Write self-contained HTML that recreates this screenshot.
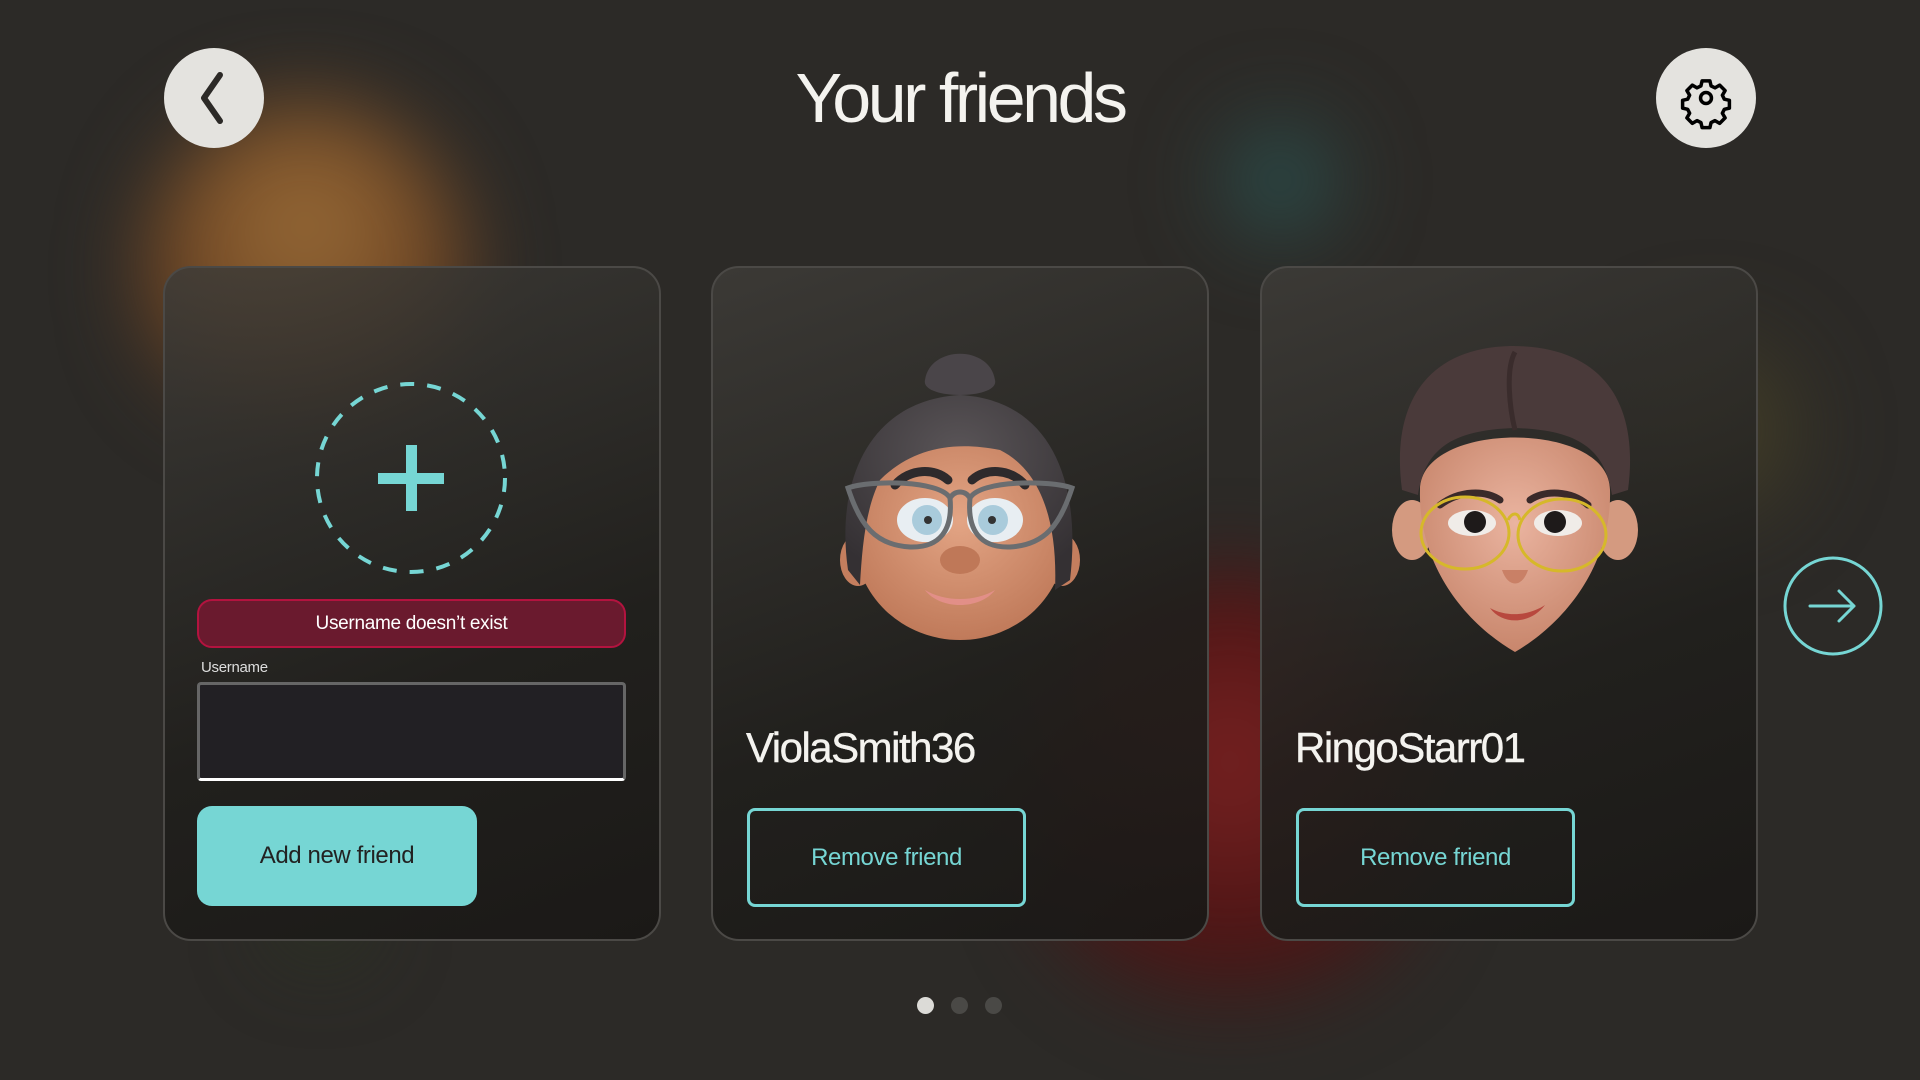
<!DOCTYPE html>
<html><head><meta charset="utf-8">
<style>
*{margin:0;padding:0;box-sizing:border-box}
html,body{width:1920px;height:1080px;overflow:hidden;background:#2c2a27;font-family:"Liberation Sans",sans-serif}
.blob{position:absolute;border-radius:50%;filter:blur(40px)}
.card{position:absolute;top:266px;width:498px;height:675px;border:2px solid #4b4946;border-radius:28px;background:linear-gradient(160deg,rgba(62,60,56,0.85),rgba(32,31,28,0.9) 60%,rgba(26,24,22,0.95));overflow:hidden}
.circbtn{position:absolute;width:100px;height:100px;border-radius:50%;background:#e4e3df;top:48px}
.title{position:absolute;left:0;width:1920px;top:58px;text-align:center;color:#f4f3ef;font-size:70px;letter-spacing:-3.5px;line-height:80px}
.err{position:absolute;left:197px;top:599px;width:429px;height:49px;background:#6a1a2e;border:2px solid #b3133f;border-radius:15px;color:#fff;font-size:19px;text-align:center;line-height:45px;letter-spacing:-0.3px}
.lbl{position:absolute;left:201px;top:659px;color:#ddd;font-size:15px;letter-spacing:-0.3px}
.inp{position:absolute;left:197px;top:682px;width:429px;height:99px;background:#222024;border:3px solid #666;border-bottom:3px solid #fff;border-radius:4px}
.add{position:absolute;left:197px;top:806px;width:280px;height:100px;background:#76d6d4;border-radius:15px;color:#222;font-size:24px;text-align:center;line-height:100px;letter-spacing:-0.4px}
.rem{position:absolute;top:808px;width:279px;height:99px;border:3px solid #76d6d4;border-radius:8px;color:#76d6d4;font-size:24px;text-align:center;line-height:93px;letter-spacing:-0.4px}
.name{position:absolute;top:724px;color:#f4f3ef;font-size:42px;letter-spacing:-1.5px;-webkit-text-stroke:0.4px #f4f3ef}
.dot{position:absolute;top:997px;width:17px;height:17px;border-radius:50%;background:#4a4946}
</style></head><body>
<div class="blob" style="left:140px;top:100px;width:330px;height:360px;background:radial-gradient(circle at 50% 35%,#9a6d38,#6b4222 55%,rgba(60,35,20,0) 75%)"></div>
<div class="blob" style="left:1200px;top:100px;width:160px;height:160px;background:radial-gradient(circle,#2a5a58,rgba(20,50,45,0) 72%)"></div>
<div class="blob" style="left:1030px;top:570px;width:400px;height:480px;background:radial-gradient(circle at 50% 40%,#7a2222,#4a1414 55%,rgba(60,20,20,0) 75%)"></div>
<div class="blob" style="left:1600px;top:300px;width:220px;height:260px;background:radial-gradient(circle,#4a4426,rgba(60,55,30,0) 72%)"></div>
<div class="blob" style="left:250px;top:860px;width:140px;height:110px;background:radial-gradient(circle,#2a3620,rgba(40,50,30,0) 72%)"></div>

<div class="circbtn" style="left:164px"><svg width="100" height="100" viewBox="0 0 100 100"><path d="M56 27 L40 50 L56 73" fill="none" stroke="#2c2a27" stroke-width="6" stroke-linecap="round" stroke-linejoin="round"/></svg></div>
<div class="circbtn" style="left:1656px"><svg width="100" height="100" viewBox="0 0 100 100"><g transform="translate(50 50) scale(0.78) translate(-50 -50)" fill="none" stroke="#000" stroke-width="4.5" stroke-linejoin="round"><path d="M45 28 h10 l1.5 6.5 l5 2.5 l6-3.5 l7 7 l-3.5 6 l2.5 5 l6.5 1.5 v10 l-6.5 1.5 l-2.5 5 l3.5 6 l-7 7 l-6-3.5 l-5 2.5 l-1.5 6.5 h-10 l-1.5-6.5 l-5-2.5 l-6 3.5 l-7-7 l3.5-6 l-2.5-5 l-6.5-1.5 v-10 l6.5-1.5 l2.5-5 l-3.5-6 l7-7 l6 3.5 l5-2.5 z"/><circle cx="50" cy="50" r="7"/></g></svg></div>
<div class="title">Your friends</div>

<div class="card" style="left:163px"></div>
<div class="card" style="left:711px"></div>
<div class="card" style="left:1260px"></div>

<svg style="position:absolute;left:311px;top:378px" width="200" height="200" viewBox="0 0 200 200"><circle cx="100" cy="100" r="94" fill="none" stroke="#76d6d4" stroke-width="4" stroke-dasharray="14 13"/><rect x="67" y="95" width="66" height="11" fill="#76d6d4"/><rect x="95" y="67" width="11" height="66" fill="#76d6d4"/></svg>
<div class="err">Username doesn’t exist</div>
<div class="lbl">Username</div>
<div class="inp"></div>
<div class="add">Add new friend</div>

<svg style="position:absolute;left:830px;top:340px" width="260" height="310" viewBox="0 0 260 310">
<defs><radialGradient id="sk" cx="50%" cy="40%" r="60%"><stop offset="0" stop-color="#e3a585"/><stop offset="1" stop-color="#c07a5a"/></radialGradient><radialGradient id="hr" cx="50%" cy="30%" r="70%"><stop offset="0" stop-color="#5a5558"/><stop offset="1" stop-color="#343033"/></radialGradient></defs>
<ellipse cx="28" cy="220" rx="18" ry="26" fill="#c47e5e"/><ellipse cx="232" cy="220" rx="18" ry="26" fill="#c47e5e"/>
<ellipse cx="130" cy="200" rx="105" ry="100" fill="url(#sk)"/>
<path d="M18 230 C5 140 40 60 130 55 C220 60 252 140 240 240 L225 250 C228 180 210 130 170 110 C120 100 80 110 50 140 C35 170 32 210 30 245 Z" fill="url(#hr)"/>
<path d="M95 40 C100 5 160 5 165 40 C170 60 90 60 95 40Z" fill="#4a4549"/>
<path d="M65 145 C80 128 105 128 118 140" stroke="#2e2a2c" stroke-width="9" fill="none" stroke-linecap="round"/><path d="M142 140 C155 128 180 128 195 145" stroke="#2e2a2c" stroke-width="9" fill="none" stroke-linecap="round"/>
<ellipse cx="95" cy="180" rx="28" ry="22" fill="#e8eef2"/><ellipse cx="165" cy="180" rx="28" ry="22" fill="#e8eef2"/>
<circle cx="97" cy="180" r="15" fill="#a9cbdb"/><circle cx="163" cy="180" r="15" fill="#a9cbdb"/>
<circle cx="98" cy="180" r="4" fill="#333"/><circle cx="162" cy="180" r="4" fill="#333"/>
<g fill="none" stroke="#6a6d70" stroke-width="5"><path d="M18 148 C40 140 110 140 120 158 C123 190 110 208 80 207 C45 205 30 185 18 148Z"/><path d="M242 148 C220 140 150 140 140 158 C137 190 150 208 180 207 C215 205 230 185 242 148Z"/><path d="M120 158 C125 150 135 150 140 158"/></g>
<ellipse cx="130" cy="220" rx="20" ry="14" fill="#bf7858"/>
<path d="M95 250 C115 262 145 262 165 250 C150 270 110 270 95 250Z" fill="#e28f88"/>
</svg>

<svg style="position:absolute;left:1390px;top:340px" width="250" height="320" viewBox="0 0 250 320">
<defs><radialGradient id="sk2" cx="50%" cy="40%" r="60%"><stop offset="0" stop-color="#eab4a0"/><stop offset="1" stop-color="#c8866c"/></radialGradient></defs>
<ellipse cx="22" cy="190" rx="20" ry="30" fill="#d49a80"/><ellipse cx="228" cy="190" rx="20" ry="30" fill="#d49a80"/>
<path d="M30 150 C30 80 220 80 220 150 C222 220 180 280 125 312 C70 280 28 220 30 150Z" fill="url(#sk2)"/>
<path d="M12 150 C0 60 40 8 120 6 C210 5 250 60 238 150 L222 155 C215 110 190 90 125 88 C60 90 35 110 28 155 Z" fill="#4a3a3a"/>
<path d="M125 12 C115 30 120 70 125 90" stroke="#3a2c2c" stroke-width="5" fill="none"/>
<path d="M50 165 C70 150 95 150 110 160" stroke="#3a2a2a" stroke-width="7" fill="none" stroke-linecap="round"/><path d="M140 160 C155 150 180 150 198 165" stroke="#3a2a2a" stroke-width="7" fill="none" stroke-linecap="round"/>
<ellipse cx="82" cy="183" rx="24" ry="13" fill="#f0ece8"/><ellipse cx="168" cy="183" rx="24" ry="13" fill="#f0ece8"/>
<circle cx="85" cy="182" r="11" fill="#1e1a1a"/><circle cx="165" cy="182" r="11" fill="#1e1a1a"/>
<g fill="none" stroke="#d6b82a" stroke-width="3"><ellipse cx="75" cy="193" rx="44" ry="36"/><ellipse cx="172" cy="195" rx="44" ry="36"/><path d="M118 180 C122 172 128 172 130 180"/></g>
<path d="M112 230 C118 248 132 248 138 230" fill="#c98066"/>
<path d="M100 268 C118 278 140 275 155 265 C140 285 112 285 100 268Z" fill="#b8483e"/>
</svg>

<div class="name" style="left:746px">ViolaSmith36</div>
<div class="name" style="left:1295px">RingoStarr01</div>
<div class="rem" style="left:747px">Remove friend</div>
<div class="rem" style="left:1296px">Remove friend</div>

<svg style="position:absolute;left:1782px;top:555px" width="102" height="102" viewBox="0 0 102 102"><circle cx="51" cy="51" r="48" fill="none" stroke="#76d6d4" stroke-width="3"/><path d="M28 51 H72 M57 36 L72 51 L57 66" fill="none" stroke="#76d6d4" stroke-width="3" stroke-linecap="round" stroke-linejoin="round"/></svg>

<div class="dot" style="left:917px;background:#dcdbd7"></div>
<div class="dot" style="left:951px"></div>
<div class="dot" style="left:985px"></div>
</body></html>
